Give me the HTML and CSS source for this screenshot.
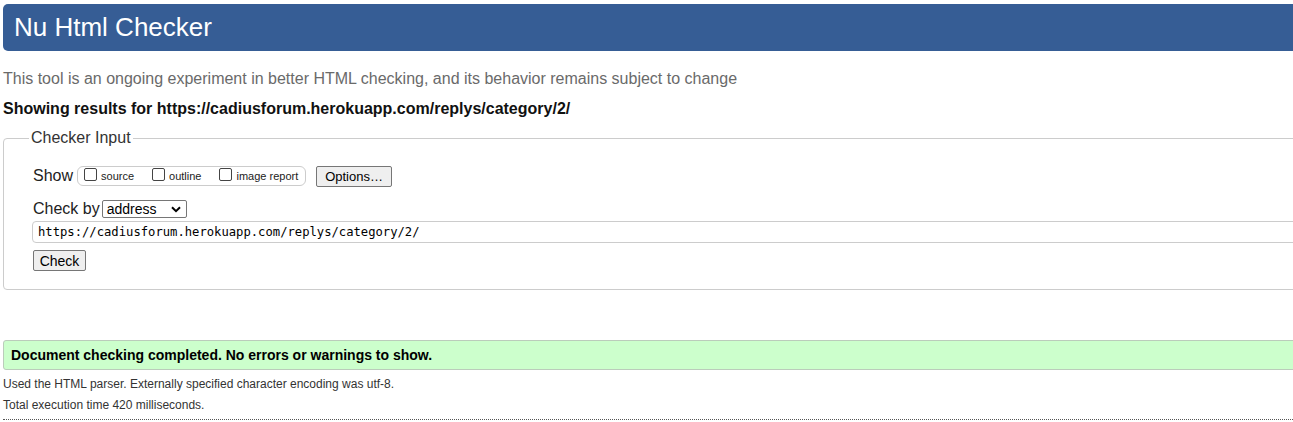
FILE: index.html
```html
<!DOCTYPE html>
<html lang="en">
<head>
<meta charset="utf-8">
<title>Showing results for https://cadiusforum.herokuapp.com/replys/category/2/ - Nu Html Checker</title>
<link rel="stylesheet" href="styles.css">
</head>
<body>
<div class="page">
  <h1 class="masthead">Nu Html Checker</h1>
  <p class="tagline">This tool is an ongoing experiment in better HTML checking, and its behavior remains subject to change</p>
  <p class="results-for">Showing results for https://cadiusforum.herokuapp.com/replys/category/2/</p>
  <fieldset class="checker-input">
    <legend class="legend">Checker Input</legend>
    <div class="row show-row">
      <span class="row-label">Show</span>
      <span class="show-group">
        <label class="opt"><span class="box"></span>source</label>
        <label class="opt"><span class="box"></span>outline</label>
        <label class="opt"><span class="box"></span>image report</label>
      </span>
      <span class="btn btn-options">Options…</span>
    </div>
    <div class="row checkby-row">
      <span class="row-label">Check by</span>
      <span class="select">address<svg class="chev" width="10" height="7" viewBox="0 0 10 7"><path d="M1 1.2 L5 5.2 L9 1.2" fill="none" stroke="#000" stroke-width="2"/></svg></span>
    </div>
    <div class="url-input">https://cadiusforum.herokuapp.com/replys/category/2/</div>
    <div class="row"><span class="btn btn-check">Check</span></div>
  </fieldset>
  <p class="success">Document checking completed. No errors or warnings to show.</p>
  <p class="details">Used the HTML parser. Externally specified character encoding was utf-8.</p>
  <p class="details">Total execution time 420 milliseconds.</p>
  <hr class="dotted">
</div>
</body>
</html>
```

FILE: styles.css
```css
html, body {
  margin: 0;
  padding: 0;
  overflow: hidden;
  background: #fff;
}
body {
  font-family: "Liberation Sans", Arial, sans-serif;
  color: #222;
}
.page {
  width: 1340px;
  padding-left: 3px;
  padding-top: 4px;
}
.masthead {
  margin: 0;
  height: 47px;
  line-height: 46px;
  background: #365d95;
  color: #fff;
  font-size: 26px;
  font-weight: normal;
  padding-left: 11px;
  border-radius: 5px;
}
.tagline {
  margin: 18px 0 0 0;
  font-size: 16px;
  line-height: 20px;
  color: #6a6a6a;
}
.results-for {
  margin: 10px 0 0 0;
  font-size: 16px;
  line-height: 20px;
  font-weight: bold;
  color: #111;
}
.checker-input {
  margin: 10px 0 0 0;
  border: 1px solid #ccc;
  border-radius: 4px;
  padding: 19px 0 18px 29px;
  min-width: 0;
}
.legend {
  margin-left: -4px;
  padding: 0 2px;
  font-size: 16px;
  color: #333;
}
.row {
  display: flex;
  align-items: center;
}
.row-label {
  font-size: 16px;
  color: #222;
}
.show-row {
  height: 20px;
}
.show-group {
  display: flex;
  align-items: center;
  margin-left: 4px;
  height: 18px;
  border: 1px solid #ccc;
  border-radius: 6px;
  padding: 0 5px 0 6px;
  width: 216px;
}
.opt {
  display: flex;
  align-items: center;
  font-size: 11px;
  color: #222;
  margin-right: 18px;
}
.opt:last-child { margin-right: 0; }
.box {
  display: inline-block;
  width: 11px;
  height: 11px;
  border: 1px solid #444;
  border-radius: 2px;
  margin-right: 4px;
  margin-top: -3px;
}
.btn {
  display: inline-flex;
  align-items: center;
  justify-content: center;
  box-sizing: border-box;
  height: 21px;
  background: #efefef;
  border: 1px solid #767676;
  border-radius: 2px;
  font-size: 13px;
  color: #000;
}
.btn-options {
  margin-left: 10px;
  width: 76px;
}
.checkby-row {
  margin-top: 14px;
  height: 18px;
}
.select {
  margin-left: 2px;
  box-sizing: border-box;
  width: 85px;
  height: 18px;
  border: 1px solid #767676;
  border-radius: 2px;
  font-size: 14px;
  color: #000;
  display: flex;
  align-items: center;
  justify-content: space-between;
  padding: 0 5px 0 4px;
}
.url-input {
  margin-top: 3px;
  margin-left: -1px;
  box-sizing: border-box;
  height: 22px;
  border: 1px solid #ccc;
  border-radius: 4px;
  padding-left: 5px;
  font-family: "DejaVu Sans Mono", "Liberation Mono", monospace;
  font-size: 12.2px;
  line-height: 20px;
  color: #000;
}
.btn-check {
  margin-top: 7px;
  width: 53px;
  font-size: 14px;
}
.success {
  margin: 50px 0 0 0;
  box-sizing: border-box;
  height: 30px;
  background: #ccffcc;
  border: 1px solid #bbccbb;
  border-radius: 3px;
  padding-left: 7px;
  font-size: 14px;
  font-weight: bold;
  line-height: 28px;
  color: #000;
}
.details {
  margin: 7px 0 0 0;
  font-size: 12px;
  line-height: 15px;
  color: #333;
}
.details + .details {
  margin-top: 6px;
}
.dotted {
  margin: 6px 0 0 0;
  border: 0;
  border-top: 1px dotted #555;
  height: 0;
}
```
